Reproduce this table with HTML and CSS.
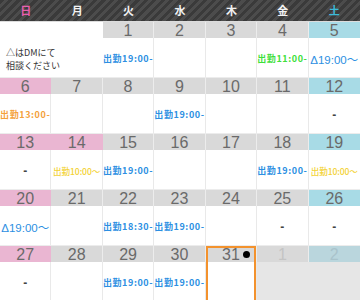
FILE: index.html
```html
<!DOCTYPE html>
<html lang="ja">
<head>
<meta charset="utf-8">
<link rel="stylesheet" href="styles.css">
</head>
<body>
<div class="cal">
  <div class="head">
    <span class="sun">日</span><span>月</span><span>火</span><span>水</span><span>木</span><span>金</span><span class="sat">土</span>
  </div>
  <div class="grid">
    <!-- week 1 -->
    <div class="cell blank"><div class="num"></div><div class="body note">△はDMにて<br>相談ください</div></div>
    <div class="cell blank"><div class="num"></div><div class="body"></div></div>
    <div class="cell"><div class="num">1</div><div class="body"><span class="t blue">出勤19:00-</span></div></div>
    <div class="cell"><div class="num">2</div><div class="body"></div></div>
    <div class="cell"><div class="num">3</div><div class="body"></div></div>
    <div class="cell"><div class="num">4</div><div class="body"><span class="t green">出勤11:00-</span></div></div>
    <div class="cell sat"><div class="num">5</div><div class="body"><span class="tri blue">Δ19:00～</span></div></div>
    <!-- week 2 -->
    <div class="cell sun"><div class="num">6</div><div class="body"><span class="t orange">出勤13:00-</span></div></div>
    <div class="cell"><div class="num">7</div><div class="body"></div></div>
    <div class="cell"><div class="num">8</div><div class="body"></div></div>
    <div class="cell"><div class="num">9</div><div class="body"><span class="t blue">出勤19:00-</span></div></div>
    <div class="cell"><div class="num">10</div><div class="body"></div></div>
    <div class="cell"><div class="num">11</div><div class="body"></div></div>
    <div class="cell sat"><div class="num">12</div><div class="body"><span class="dash">-</span></div></div>
    <!-- week 3 -->
    <div class="cell sun"><div class="num">13</div><div class="body"><span class="dash">-</span></div></div>
    <div class="cell sun"><div class="num">14</div><div class="body"><span class="t yellow">出勤10:00～</span></div></div>
    <div class="cell"><div class="num">15</div><div class="body"><span class="t blue">出勤19:00-</span></div></div>
    <div class="cell"><div class="num">16</div><div class="body"></div></div>
    <div class="cell"><div class="num">17</div><div class="body"></div></div>
    <div class="cell"><div class="num">18</div><div class="body"><span class="t blue">出勤19:00-</span></div></div>
    <div class="cell sat"><div class="num">19</div><div class="body"><span class="t yellow">出勤10:00～</span></div></div>
    <!-- week 4 -->
    <div class="cell sun"><div class="num">20</div><div class="body"><span class="tri blue">Δ19:00～</span></div></div>
    <div class="cell"><div class="num">21</div><div class="body"></div></div>
    <div class="cell"><div class="num">22</div><div class="body"><span class="t blue">出勤18:30-</span></div></div>
    <div class="cell"><div class="num">23</div><div class="body"><span class="t blue">出勤19:00-</span></div></div>
    <div class="cell"><div class="num">24</div><div class="body"></div></div>
    <div class="cell"><div class="num">25</div><div class="body"><span class="dash">-</span></div></div>
    <div class="cell sat"><div class="num">26</div><div class="body"><span class="dash">-</span></div></div>
    <!-- week 5 -->
    <div class="cell sun"><div class="num">27</div><div class="body"><span class="dash">-</span></div></div>
    <div class="cell"><div class="num">28</div><div class="body"></div></div>
    <div class="cell"><div class="num">29</div><div class="body"><span class="t blue">出勤19:00-</span></div></div>
    <div class="cell"><div class="num">30</div><div class="body"><span class="t blue">出勤19:00-</span></div></div>
    <div class="cell selected"><div class="num">31<span class="dot"></span></div><div class="body"></div></div>
    <div class="cell next"><div class="num">1</div><div class="body"></div></div>
    <div class="cell next sat"><div class="num">2</div><div class="body"></div></div>
  </div>
</div>
</body>
</html>
```

FILE: styles.css
```css
* { box-sizing: border-box; }
html, body { margin: 0; padding: 0; background: #fff; }
body {
  width: 360px;
  height: 300px;
  overflow: hidden;
  font-family: "Liberation Sans", "Noto Sans CJK JP", sans-serif;
}
.cal { width: 360px; }
.head {
  height: 22px;
  display: grid;
  grid-template-columns: repeat(7, 1fr);
  align-items: center;
  background: repeating-linear-gradient(135deg, #3a3a3a 0 3px, #4c4c4c 3px 6px);
  border-bottom: 1px solid #dcdcdc;
}
.head span {
  text-align: center;
  color: #f2f2f2;
  font-family: "Noto Sans CJK JP", sans-serif;
  font-weight: 700;
  font-size: 11px;
  line-height: 21px;
}
.head .sun { color: #e85fae; }
.head .sat { color: #3cbad8; }

.grid {
  display: grid;
  grid-template-columns: repeat(7, 1fr);
  grid-auto-rows: 56px;
}
.cell {
  position: relative;
  display: flex;
  flex-direction: column;
  min-width: 0;
}
.num {
  height: 16px;
  background: #d9d9d9;
  border-right: 1px solid #ececec;
  color: #6a6a6a;
  font-size: 16px;
  line-height: 17px;
  text-align: center;
  position: relative;
}
.sun .num { background: #eab6d2; border-right-color: #eab6d2; }
.sat .num { background: #a8dbe6; border-right: none; }
.body {
  flex: 1;
  border-right: 1px solid #e9e9e9;
  border-bottom: 1px solid #ececec;
  display: flex;
  align-items: center;
  justify-content: center;
  white-space: nowrap;
  padding-top: 2px;
}
.sat .body { border-right: none; }

.blank .num { background: #fff; border-right: none; }
.blank .body { border-right: none; }
.note {
  justify-content: flex-start;
  align-items: center;
  padding-left: 6px;
  padding-top: 3px;
  font-family: "Noto Sans CJK JP", sans-serif;
  font-size: 9px;
  line-height: 13px;
  color: #333;
  overflow: visible;
  position: relative;
  z-index: 1;
}

.t {
  font-family: "Noto Sans CJK JP", sans-serif;
  font-weight: 700;
  font-size: 9px;
  letter-spacing: 0.6px;
}
.t.yellow {
  font-weight: 500;
  font-size: 8.6px;
  letter-spacing: -0.1px;
}
.tri {
  font-family: "Liberation Sans", "Noto Sans CJK JP", sans-serif;
  font-size: 11.5px;
  letter-spacing: 0;
}
.dash {
  color: #444;
  font-size: 12px;
  font-weight: 700;
}
.blue { color: #2c8fe2; }
.green { color: #3ee03a; }
.orange { color: #f4a13a; }
.yellow { color: #f3d234; }

.selected::after {
  content: "";
  position: absolute;
  inset: 0 1px 0 0;
  border: 2px solid #f3922d;
  pointer-events: none;
}
.dot {
  position: absolute;
  right: 6px;
  top: 5px;
  width: 7px;
  height: 7px;
  border-radius: 50%;
  background: #000;
}
.next .num { color: #c4c4c4; }
.next.sat .num { background: #bad6dd; color: #a9c3cb; }
.next .body { background: #e6e6e6; border-right-color: #e6e6e6; border-bottom-color: #e6e6e6; }
```
